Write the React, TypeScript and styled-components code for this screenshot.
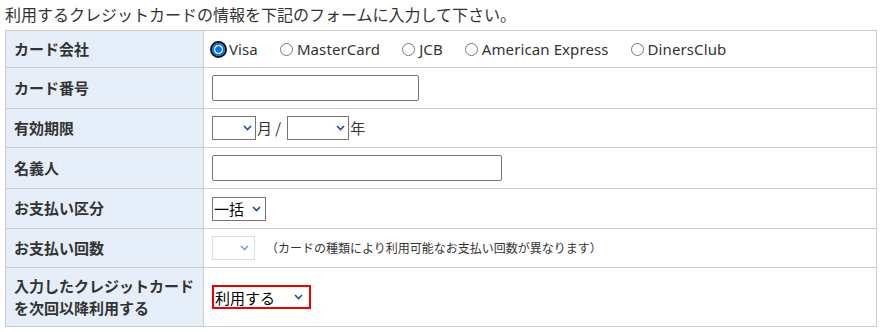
import React from 'react';
import styled, { createGlobalStyle } from 'styled-components';

//全体のスタイル
const GlobalStyle = createGlobalStyle`
  body {
    margin: 5px;
    background: #fff;
    color: #333;
    font-family: "Noto Sans", "Noto Sans CJK JP", sans-serif;
  }
`;

const Lead = styled.p`
  margin: 0 0 5px 0;
  font-size: 16px;
  line-height: 20px;
  color: #333;
`;

const FormTable = styled.table`
  width: 872px;
  border-collapse: collapse;
  border: 1px solid #ccc;
  font-size: 15px;
`;

const Th = styled.th`
  width: 181px;
  padding: 7px 8px;
  background: #e6eef9;
  border: 1px solid #ccc;
  text-align: left;
  font-weight: bold;
  line-height: 22px;
  color: #333;
  vertical-align: middle;
`;

const Td = styled.td`
  padding: 7px 8px;
  border: 1px solid #ccc;
  line-height: 22px;
  vertical-align: middle;
  color: #333;
`;

const Inline = styled.div`
  display: flex;
  align-items: center;
`;

const RadioLabel = styled.label`
  display: inline-flex;
  align-items: center;
  margin-right: 22px;
  letter-spacing: 0.1px;
  color: #333;
`;

const Radio = styled.input`
  appearance: none;
  width: 13px;
  height: 13px;
  margin: 0 4px 0 0;
  border: 1px solid #767676;
  border-radius: 50%;
  background: #fff;
  box-sizing: border-box;
  &:checked {
    border: 2px solid #0075ff;
    background: radial-gradient(circle, #0075ff 0 3px, #fff 3.5px);
    outline: 2px solid #101010;
    outline-offset: 0px;
  }
`;

const TextInput = styled.input<{ w: number }>`
  width: ${({ w }) => w}px;
  height: 26px;
  box-sizing: border-box;
  border: 1px solid #767676;
  border-radius: 2px;
  padding: 0 4px;
  font-size: 15px;
  vertical-align: middle;
`;

const SelectWrap = styled.span<{ w: number }>`
  position: relative;
  display: inline-block;
  width: ${({ w }) => w}px;
  height: 24px;
  vertical-align: middle;
`;

const Select = styled.select<{ red?: boolean, disabledLook?: boolean }>`
  appearance: none;
  width: 100%;
  height: 100%;
  box-sizing: border-box;
  margin: 0;
  padding: 0 0 0 1px;
  font-family: "Noto Sans CJK JP", sans-serif;
  font-size: 15px;
  color: #000;
  background: #fff;
  border-radius: 0;
  border: ${({ red, disabledLook }) =>
    red ? '2px solid #e00' : disabledLook ? '1px solid #ddd' : '1px solid #767676'};
  outline: none;
`;

const Chevron = styled.svg<{ right: number }>`
  position: absolute;
  top: 9px;
  right: ${({ right }) => right}px;
  pointer-events: none;
`;

const Unit = styled.span`
  margin: 0 6px 0 1px;
  color: #333;
  font-family: "Noto Sans CJK JP", sans-serif;
`;

const Note = styled.span`
  margin-left: 11px;
  font-size: 12px;
  color: #333;
  font-family: "Noto Sans CJK JP", sans-serif;
`;

type selectProps = {
  w: number,
  right: number,
  value?: string,
  red?: boolean,
  faded?: boolean
}

function DropBox(props: selectProps) {
  return (
    <SelectWrap w={props.w}>
      <Select red={props.red} disabledLook={props.faded} defaultValue={props.value ?? ''}>
        <option value={props.value ?? ''}>{props.value ?? ''}</option>
      </Select>
      <Chevron right={props.right} width="9" height="6" viewBox="0 0 9 6">
        <path
          d="M1 1 L4.5 4.5 L8 1"
          fill="none"
          stroke={props.faded ? '#7d9ccc' : '#1f4e9c'}
          strokeWidth="1.6"
        />
      </Chevron>
    </SelectWrap>
  );
}

const brands = ['Visa', 'MasterCard', 'JCB', 'American Express', 'DinersClub'];

function App() {
  return (
    <>
      <GlobalStyle />
      <Lead>利用するクレジットカードの情報を下記のフォームに入力して下さい。</Lead>
      <FormTable>
        <tbody>
          <tr>
            <Th>カード会社</Th>
            <Td>
              <Inline>
                {brands.map((b, i) => (
                  <RadioLabel key={b}>
                    <Radio type="radio" name="brand" defaultChecked={i === 0} />
                    {b}
                  </RadioLabel>
                ))}
              </Inline>
            </Td>
          </tr>
          <tr>
            <Th>カード番号</Th>
            <Td><TextInput w={207} /></Td>
          </tr>
          <tr>
            <Th>有効期限</Th>
            <Td>
              <Inline>
                <DropBox w={44} right={4} />
                <Unit>月 /</Unit>
                <DropBox w={62} right={4} />
                <Unit>年</Unit>
              </Inline>
            </Td>
          </tr>
          <tr>
            <Th>名義人</Th>
            <Td><TextInput w={290} /></Td>
          </tr>
          <tr>
            <Th>お支払い区分</Th>
            <Td><DropBox w={54} right={5} value="一括" /></Td>
          </tr>
          <tr>
            <Th>お支払い回数</Th>
            <Td>
              <Inline>
                <DropBox w={43} right={6} faded />
                <Note>（カードの種類により利用可能なお支払い回数が異なります）</Note>
              </Inline>
            </Td>
          </tr>
          <tr>
            <Th>入力したクレジットカード<br />を次回以降利用する</Th>
            <Td><DropBox w={99} right={8} value="利用する" red /></Td>
          </tr>
        </tbody>
      </FormTable>
    </>
  );
}

export default App;
